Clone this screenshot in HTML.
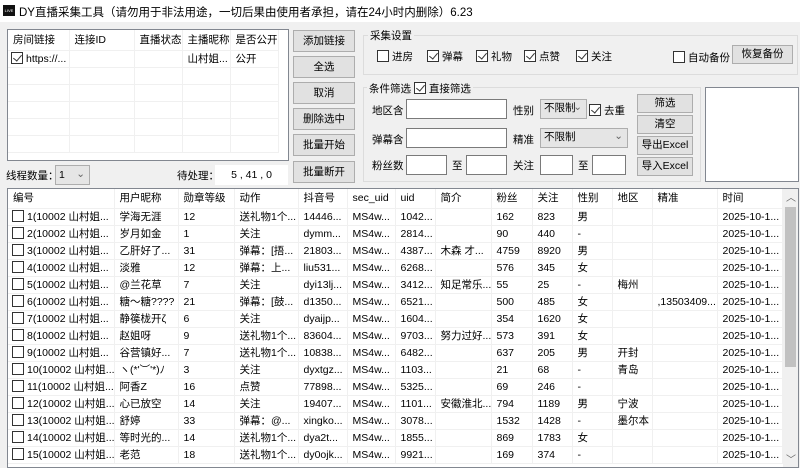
<!DOCTYPE html>
<html><head><meta charset="utf-8"><style>
*{box-sizing:border-box;margin:0;padding:0}
body{width:800px;height:466px;background:#f0f0f0;font-family:"Liberation Sans","Noto Sans CJK SC",sans-serif;font-size:10.5px;color:#000;position:relative;overflow:hidden}
.a{position:absolute;white-space:nowrap}
.btn{position:absolute;background:#e1e1e1;border:1px solid #adadad;text-align:center;line-height:20px}
.inp{position:absolute;background:#fff;border:1px solid #7a7a7a}
.cb{display:inline-block;width:12px;height:12px;border:1px solid #333;background:#fff;vertical-align:-2px;margin-right:3px;position:relative}
.cb.on::after{content:"";position:absolute;left:3px;top:0px;width:4px;height:7px;border:solid #333;border-width:0 1px 1px 0;transform:rotate(40deg)}
.grp{position:absolute;border:1px solid #dcdcdc}
.sel{position:absolute;background:#e5e5e5;border:1px solid #adadad;padding-left:3px;line-height:17px}
.sel::after{content:"⌄";position:absolute;right:4px;top:-1px;color:#666}
table{border-collapse:collapse;table-layout:fixed}
td{height:17px;border-right:1px solid #f0f0f0;border-bottom:1px solid #f0f0f0;padding-left:5px;overflow:hidden;white-space:nowrap;line-height:16px;text-overflow:clip}
</style></head><body>
<div class="a" style="left:0;top:0;width:800px;height:22px;background:#fff"></div>
<div class="a" style="left:3px;top:5px;width:12px;height:11px;background:#111;color:#fff;font-size:4px;line-height:11px;text-align:center">LIVE</div>
<div class="a" style="left:19px;top:4px;font-size:11.5px">DY直播采集工具（请勿用于非法用途，一切后果由使用者承担，请在24小时内删除）6.23</div>

<div class="a" style="left:7px;top:29px;width:282px;height:132px;background:#fff;border:1px solid #828790;overflow:hidden">
<table style="width:270px">
<tr style="height:20px"><td style="width:61px">房间链接</td><td style="width:65px">连接ID</td><td style="width:48px">直播状态</td><td style="width:48px">主播昵称</td><td style="width:48px">是否公开</td></tr>
<tr><td style="padding-left:3px"><span class="cb on"></span>https://...</td><td></td><td></td><td>山村姐...</td><td>公开</td></tr>
<tr><td></td><td></td><td></td><td></td><td></td></tr>
<tr><td></td><td></td><td></td><td></td><td></td></tr>
<tr><td></td><td></td><td></td><td></td><td></td></tr>
<tr><td></td><td></td><td></td><td></td><td></td></tr>
<tr><td></td><td></td><td></td><td></td><td></td></tr>
</table></div>

<div class="btn" style="left:293px;top:30px;width:62px;height:22px">添加链接</div>
<div class="btn" style="left:293px;top:56px;width:62px;height:22px">全选</div>
<div class="btn" style="left:293px;top:82px;width:62px;height:22px">取消</div>
<div class="btn" style="left:293px;top:108px;width:62px;height:22px">删除选中</div>
<div class="btn" style="left:293px;top:134px;width:62px;height:22px">批量开始</div>
<div class="btn" style="left:293px;top:161px;width:62px;height:22px">批量断开</div>

<div class="a" style="left:6px;top:168px">线程数量：</div>
<div class="sel" style="left:55px;top:165px;width:35px;height:20px;line-height:18px">1</div>
<div class="a" style="left:177px;top:168px">待处理：</div>
<div class="a" style="left:215px;top:165px;width:73px;height:20px;background:#fff;text-align:center;line-height:20px">5 , 41 , 0</div>

<div class="grp" style="left:363px;top:35px;width:435px;height:40px"></div>
<div class="a" style="left:368px;top:28px;background:#f0f0f0;padding:0 2px">采集设置</div>
<div class="a" style="left:377px;top:49px"><span class="cb"></span>进房</div>
<div class="a" style="left:427px;top:49px"><span class="cb on"></span>弹幕</div>
<div class="a" style="left:476px;top:49px"><span class="cb on"></span>礼物</div>
<div class="a" style="left:524px;top:49px"><span class="cb on"></span>点赞</div>
<div class="a" style="left:576px;top:49px"><span class="cb on"></span>关注</div>
<div class="a" style="left:673px;top:50px"><span class="cb"></span>自动备份</div>
<div class="btn" style="left:732px;top:45px;width:61px;height:19px;line-height:17px">恢复备份</div>

<div class="grp" style="left:363px;top:87px;width:338px;height:95px"></div>
<div class="a" style="left:367px;top:81px;background:#f0f0f0;padding:0 2px">条件筛选 <span class="cb on"></span>直接筛选</div>
<div class="a" style="left:372px;top:103px">地区含</div>
<div class="inp" style="left:406px;top:99px;width:101px;height:20px"></div>
<div class="a" style="left:513px;top:103px">性别</div>
<div class="sel" style="left:540px;top:99px;width:47px;height:20px">不限制</div>
<div class="a" style="left:589px;top:103px"><span class="cb on"></span>去重</div>
<div class="a" style="left:372px;top:132px">弹幕含</div>
<div class="inp" style="left:406px;top:128px;width:101px;height:20px"></div>
<div class="a" style="left:513px;top:132px">精准</div>
<div class="sel" style="left:540px;top:128px;width:88px;height:20px">不限制</div>
<div class="a" style="left:372px;top:158px">粉丝数</div>
<div class="inp" style="left:406px;top:155px;width:41px;height:20px"></div>
<div class="a" style="left:452px;top:158px">至</div>
<div class="inp" style="left:466px;top:155px;width:41px;height:20px"></div>
<div class="a" style="left:513px;top:158px">关注</div>
<div class="inp" style="left:540px;top:155px;width:33px;height:20px"></div>
<div class="a" style="left:578px;top:158px">至</div>
<div class="inp" style="left:592px;top:155px;width:34px;height:20px"></div>
<div class="btn" style="left:637px;top:94px;width:56px;height:19px;line-height:17px">筛选</div>
<div class="btn" style="left:637px;top:115px;width:56px;height:19px;line-height:17px">清空</div>
<div class="btn" style="left:637px;top:136px;width:56px;height:19px;line-height:17px">导出Excel</div>
<div class="btn" style="left:637px;top:157px;width:56px;height:19px;line-height:17px">导入Excel</div>
<div class="a" style="left:705px;top:87px;width:94px;height:95px;background:#fff;border:1px solid #828790"></div>

<div class="a" style="left:7px;top:188px;width:792px;height:280px;background:#fff;border:1px solid #828790;overflow:hidden">
<table style="width:774px">
<tr style="height:19px"><td style="width:106px">编号</td><td style="width:64px">用户昵称</td><td style="width:56px">勋章等级</td><td style="width:64px">动作</td><td style="width:49px">抖音号</td><td style="width:48px">sec_uid</td><td style="width:40px">uid</td><td style="width:56px">简介</td><td style="width:41px">粉丝</td><td style="width:40px">关注</td><td style="width:40px">性别</td><td style="width:40px">地区</td><td style="width:65px">精准</td><td style="width:65px">时间</td></tr>
<tr><td style="padding-left:4px"><span class="cb"></span>1(10002 山村姐...</td><td>学海无涯</td><td>12</td><td>送礼物1个...</td><td>14446...</td><td>MS4w...</td><td>1042...</td><td></td><td>162</td><td>823</td><td>男</td><td></td><td></td><td>2025-10-1...</td></tr>
<tr><td style="padding-left:4px"><span class="cb"></span>2(10002 山村姐...</td><td>岁月如金</td><td>1</td><td>关注</td><td>dymm...</td><td>MS4w...</td><td>2814...</td><td></td><td>90</td><td>440</td><td>-</td><td></td><td></td><td>2025-10-1...</td></tr>
<tr><td style="padding-left:4px"><span class="cb"></span>3(10002 山村姐...</td><td>乙肝好了...</td><td>31</td><td>弹幕：[捂...</td><td>21803...</td><td>MS4w...</td><td>4387...</td><td>木森 才...</td><td>4759</td><td>8920</td><td>男</td><td></td><td></td><td>2025-10-1...</td></tr>
<tr><td style="padding-left:4px"><span class="cb"></span>4(10002 山村姐...</td><td>淡雅</td><td>12</td><td>弹幕：上...</td><td>liu531...</td><td>MS4w...</td><td>6268...</td><td></td><td>576</td><td>345</td><td>女</td><td></td><td></td><td>2025-10-1...</td></tr>
<tr><td style="padding-left:4px"><span class="cb"></span>5(10002 山村姐...</td><td>@兰花草</td><td>7</td><td>关注</td><td>dyi13lj...</td><td>MS4w...</td><td>3412...</td><td>知足常乐...</td><td>55</td><td>25</td><td>-</td><td>梅州</td><td></td><td>2025-10-1...</td></tr>
<tr><td style="padding-left:4px"><span class="cb"></span>6(10002 山村姐...</td><td>糖～糖????</td><td>21</td><td>弹幕：[鼓...</td><td>d1350...</td><td>MS4w...</td><td>6521...</td><td></td><td>500</td><td>485</td><td>女</td><td></td><td>,13503409...</td><td>2025-10-1...</td></tr>
<tr><td style="padding-left:4px"><span class="cb"></span>7(10002 山村姐...</td><td>静篌栊开ζ</td><td>6</td><td>关注</td><td>dyaijp...</td><td>MS4w...</td><td>1604...</td><td></td><td>354</td><td>1620</td><td>女</td><td></td><td></td><td>2025-10-1...</td></tr>
<tr><td style="padding-left:4px"><span class="cb"></span>8(10002 山村姐...</td><td>赵姐呀</td><td>9</td><td>送礼物1个...</td><td>83604...</td><td>MS4w...</td><td>9703...</td><td>努力过好...</td><td>573</td><td>391</td><td>女</td><td></td><td></td><td>2025-10-1...</td></tr>
<tr><td style="padding-left:4px"><span class="cb"></span>9(10002 山村姐...</td><td>谷营镇好...</td><td>7</td><td>送礼物1个...</td><td>10838...</td><td>MS4w...</td><td>6482...</td><td></td><td>637</td><td>205</td><td>男</td><td>开封</td><td></td><td>2025-10-1...</td></tr>
<tr><td style="padding-left:4px"><span class="cb"></span>10(10002 山村姐...</td><td>ヽ(*'︶'*)ﾉ</td><td>3</td><td>关注</td><td>dyxtgz...</td><td>MS4w...</td><td>1103...</td><td></td><td>21</td><td>68</td><td>-</td><td>青岛</td><td></td><td>2025-10-1...</td></tr>
<tr><td style="padding-left:4px"><span class="cb"></span>11(10002 山村姐...</td><td>阿香Z</td><td>16</td><td>点赞</td><td>77898...</td><td>MS4w...</td><td>5325...</td><td></td><td>69</td><td>246</td><td>-</td><td></td><td></td><td>2025-10-1...</td></tr>
<tr><td style="padding-left:4px"><span class="cb"></span>12(10002 山村姐...</td><td>心已放空</td><td>14</td><td>关注</td><td>19407...</td><td>MS4w...</td><td>1101...</td><td>安徽淮北...</td><td>794</td><td>1189</td><td>男</td><td>宁波</td><td></td><td>2025-10-1...</td></tr>
<tr><td style="padding-left:4px"><span class="cb"></span>13(10002 山村姐...</td><td>舒婷</td><td>33</td><td>弹幕：@...</td><td>xingko...</td><td>MS4w...</td><td>3078...</td><td></td><td>1532</td><td>1428</td><td>-</td><td>墨尔本</td><td></td><td>2025-10-1...</td></tr>
<tr><td style="padding-left:4px"><span class="cb"></span>14(10002 山村姐...</td><td>等时光的...</td><td>14</td><td>送礼物1个...</td><td>dya2t...</td><td>MS4w...</td><td>1855...</td><td></td><td>869</td><td>1783</td><td>女</td><td></td><td></td><td>2025-10-1...</td></tr>
<tr><td style="padding-left:4px"><span class="cb"></span>15(10002 山村姐...</td><td>老范</td><td>18</td><td>送礼物1个...</td><td>dy0ojk...</td><td>MS4w...</td><td>9921...</td><td></td><td>169</td><td>374</td><td>-</td><td></td><td></td><td>2025-10-1...</td></tr>
</table>
<div class="a" style="left:775px;top:0;width:16px;height:280px;background:#f0f0f0"></div>
<div class="a" style="left:778px;top:0px;color:#666;font-size:10px">︿</div>
<div class="a" style="left:777px;top:18px;width:11px;height:160px;background:#c1c1c1"></div>
<div class="a" style="left:778px;top:262px;color:#666;font-size:10px">﹀</div>
</div>
</body></html>
